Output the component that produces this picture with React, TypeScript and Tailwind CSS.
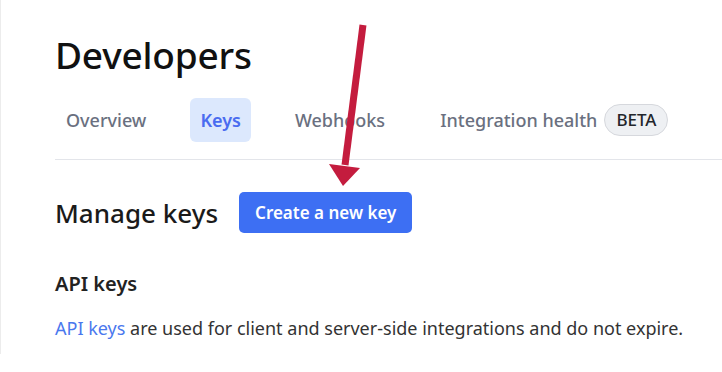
import React from "react";

function Arrow() {
  return (
    <svg
      className="absolute left-[320px] top-[20px]"
      width="60"
      height="170"
      viewBox="0 0 60 170"
    >
      <line x1="43" y1="5" x2="25" y2="145" stroke="#c41c3e" strokeWidth="7" />
      <polygon points="9,144 40,148 23,166" fill="#c41c3e" />
    </svg>
  );
}

export default function App() {
  return (
    <div
      className="relative w-[722px] h-[372px] bg-white overflow-hidden"
      style={{ fontFamily: '"Noto Sans", "Open Sans", sans-serif' }}
    >
      <div className="h-[354px] border-l border-[#ececec] pl-[54px] pt-[31px]">
        <h1 className="text-[37px] leading-[48px] font-medium text-[#111] tracking-[-0.2px]">
          Developers
        </h1>

        {/* Tabs */}
        <div className="mt-[19px] flex items-center gap-[33px] border-b border-[#e3e5ea] pb-[17px]">
          <span className="px-[11px] text-[18px] leading-[26px] font-medium text-[#6a7080]">
            Overview
          </span>
          <span className="rounded-[6px] bg-[#dce8fd] px-[10px] py-[9px] text-[18px] leading-[26px] font-semibold text-[#4a6cf0]">
            Keys
          </span>
          <span className="px-[11px] text-[18px] leading-[26px] font-medium text-[#6a7080]">
            Webhooks
          </span>
          <div className="flex items-center gap-[7px]">
            <span className="pl-[11px] text-[18px] leading-[26px] font-medium text-[#6a7080]">
              Integration health
            </span>
            <span className="rounded-full border border-[#d6d8dd] bg-[#eef0f3] px-[11px] py-[2px] text-[17px] leading-[26px] font-medium text-[#23262b]">
              BETA
            </span>
          </div>
        </div>

        {/* Manage keys */}
        <div className="mt-[32px] flex items-center gap-[21px]">
          <h2 className="text-[26px] leading-[34px] font-medium text-[#1a1a1a]">
            Manage keys
          </h2>
          <button className="rounded-[5px] bg-[#3d6ff3] px-[16px] py-[7px] text-[17px] leading-[27px] font-semibold text-white">
            Create a new key
          </button>
        </div>

        <h3 className="mt-[37px] text-[20px] leading-[28px] font-semibold text-[#222]">
          API keys
        </h3>
        <p className="mt-[17px] text-[18px] leading-[26px] text-[#333]">
          <span className="text-[#4a78ee]">API keys</span> are used for client and
          server-side integrations and do not expire.
        </p>
      </div>
      <Arrow />
    </div>
  );
}
